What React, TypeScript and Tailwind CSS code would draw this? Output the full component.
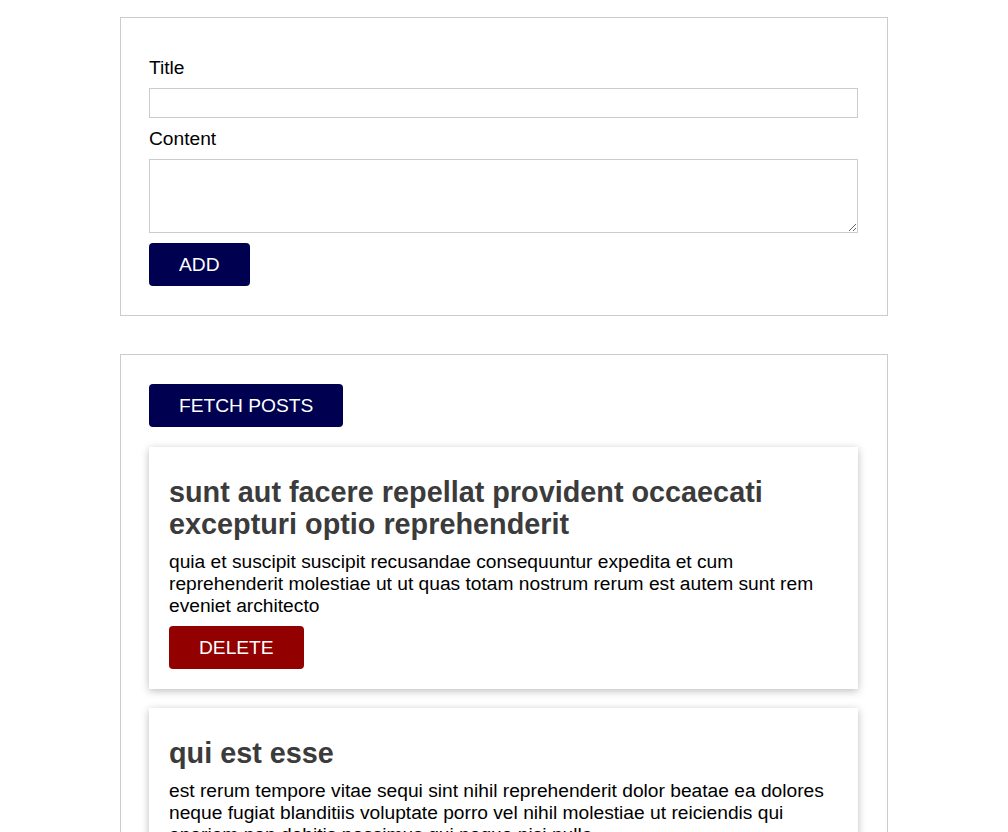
import { useState } from "react";

type Post = { id: number; title: string; body: string };

const initialPosts: Post[] = [
  {
    id: 1,
    title: "sunt aut facere repellat provident occaecati excepturi optio reprehenderit",
    body: "quia et suscipit suscipit recusandae consequuntur expedita et cum reprehenderit molestiae ut ut quas totam nostrum rerum est autem sunt rem eveniet architecto",
  },
  {
    id: 2,
    title: "qui est esse",
    body: "est rerum tempore vitae sequi sint nihil reprehenderit dolor beatae ea dolores neque fugiat blanditiis voluptate porro vel nihil molestiae ut reiciendis qui aperiam non debitis possimus qui neque nisi nulla",
  },
  {
    id: 3,
    title: "ea molestias quasi exercitationem repellat qui ipsa sit aut",
    body: "et iusto sed quo iure voluptatem occaecati omnis eligendi aut ad voluptatem doloribus vel accusantium quis pariatur molestiae porro eius odio et labore et velit aut",
  },
];

export default function App() {
  const [posts, setPosts] = useState<Post[]>(initialPosts);
  const [title, setTitle] = useState("");
  const [content, setContent] = useState("");

  const addPost = () => {
    if (!title) return;
    setPosts([{ id: Date.now(), title, body: content }, ...posts]);
    setTitle("");
    setContent("");
  };

  return (
    <div className="min-h-screen bg-white pt-[17px] pb-10 font-['Liberation_Sans',Arial,sans-serif] text-[19.2px] text-black">
      <section className="mx-auto w-[768px] border border-[#cccccc] pl-[28px] pr-[29px] pt-[39px] pb-[29px]">
        <div className="flex flex-col">
          <label className="leading-[22px]">Title</label>
          <input
            value={title}
            onChange={(e) => setTitle(e.target.value)}
            className="mt-[9px] h-[30px] w-full border border-[#cccccc] px-1 outline-none"
          />
          <label className="mt-[10px] leading-[22px]">Content</label>
          <textarea
            value={content}
            onChange={(e) => setContent(e.target.value)}
            className="mt-[9px] h-[74px] w-full border border-[#cccccc] px-1 outline-none"
          />
          <div className="mt-[10px]">
            <button
              onClick={addPost}
              className="h-[43px] rounded-[4px] bg-[#000050] px-[30px] leading-[22px] text-white"
            >
              ADD
            </button>
          </div>
        </div>
      </section>

      <section className="mx-auto mt-[38px] w-[768px] border border-[#cccccc] pl-[28px] pr-[29px] pt-[29px] pb-[28px]">
        <button className="h-[43px] rounded-[4px] bg-[#000050] px-[30px] leading-[22px] text-white">
          FETCH POSTS
        </button>
        <div className="mt-[20px] flex flex-col gap-[19px]">
          {posts.map((p) => (
            <div
              key={p.id}
              className="bg-white px-[20px] pt-[29px] pb-[20px] shadow-[0_2px_8px_rgba(0,0,0,0.26)]"
            >
              <h2 className="text-[28.8px] font-bold leading-[32px] text-[#3b3b3b]">{p.title}</h2>
              <p className="mt-[11px] leading-[22px]">{p.body}</p>
              <button
                onClick={() => setPosts(posts.filter((x) => x.id !== p.id))}
                className="mt-[9px] h-[43px] rounded-[4px] bg-[#930000] px-[30px] leading-[22px] text-white"
              >
                DELETE
              </button>
            </div>
          ))}
        </div>
      </section>
    </div>
  );
}
